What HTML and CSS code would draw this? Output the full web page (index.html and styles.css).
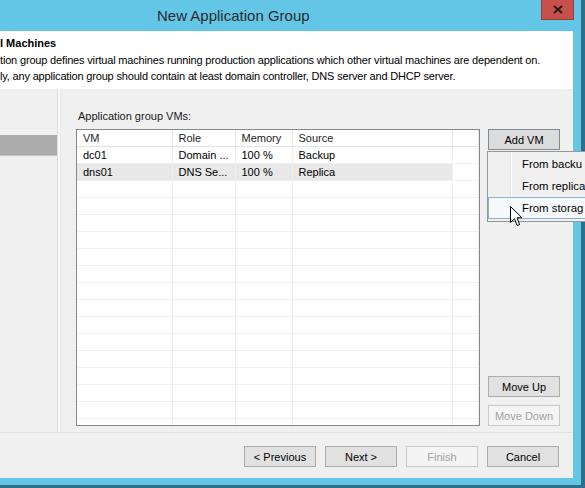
FILE: index.html
```html
<!DOCTYPE html>
<html lang="en">
<head>
    <meta charset="UTF-8">
    <meta name="viewport" content="width=device-width, initial-scale=1.0">
    <title>New Application Group</title>
    <link rel="stylesheet" href="styles.css">
</head>
<body>

    <div class="window">
        <div class="titlebar">
            <div class="title">New Application Group</div>
            <div class="close-btn">
                <svg width="10" height="9" viewBox="0 0 10 9"><path d="M1 1 L9 8 M9 1 L1 8" stroke="#2a1a1a" stroke-width="2.2"/></svg>
            </div>
        </div>

        <div class="dialog">
            <!-- Kopfbereich -->
            <div class="header">
                <div class="header-title">l Machines</div>
                <div class="header-desc">
                    tion group defines virtual machines running production applications which other virtual machines are dependent on.<br>
                    ly, any application group should contain at least domain controller, DNS server and DHCP server.
                </div>
            </div>

            <div class="body">
                <div class="nav">
                    <div class="nav-item active"></div>
                </div>
                <div class="nav-sep"></div>

                <div class="main">
                    <div class="label">Application group VMs:</div>
                    <div class="vm-area">
                        <div class="vm-list">
                            <table class="vm-table">
                                <colgroup>
                                    <col style="width: 95px">
                                    <col style="width: 63px">
                                    <col style="width: 57px">
                                    <col style="width: 160px">
                                    <col>
                                </colgroup>
                                <thead>
                                    <tr><th>VM</th><th>Role</th><th>Memory</th><th>Source</th><th></th></tr>
                                </thead>
                                <tbody id="vm-rows">
                                    <tr><td>dc01</td><td>Domain ...</td><td>100 %</td><td>Backup</td><td></td></tr>
                                    <tr class="selected"><td>dns01</td><td>DNS Se...</td><td>100 %</td><td>Replica</td><td class="plain"></td></tr>
                                </tbody>
                            </table>
                        </div>
                        <div class="side-buttons">
                            <button class="btn btn-active">Add VM</button>
                            <div class="spacer"></div>
                            <button class="btn">Move Up</button>
                            <button class="btn" disabled>Move Down</button>
                        </div>
                    </div>
                </div>
            </div>

            <div class="footer">
                <button class="btn">&lt; Previous</button>
                <button class="btn">Next &gt;</button>
                <button class="btn" disabled>Finish</button>
                <button class="btn">Cancel</button>
            </div>
        </div>
    </div>

    <!-- Kontextmenü von "Add VM" (ragt über den Fensterrand) -->
    <div class="menu">
        <div class="menu-item">From backu</div>
        <div class="menu-item">From replica</div>
        <div class="menu-item hover">From storag</div>
    </div>

    <svg class="cursor" width="13" height="21" viewBox="0 0 13 21">
        <path d="M0.5 0.5 V16.5 L4.5 12.8 L7.2 19.5 L9.6 18.5 L7 11.8 H12 Z" fill="#fff" stroke="#000" stroke-width="1"/>
    </svg>

    <script>
        // leere Zeilen auffüllen
        const rows = document.getElementById('vm-rows');
        for (let i = 0; i < 15; i++) {
            const tr = document.createElement('tr');
            for (let c = 0; c < 5; c++) {
                tr.appendChild(document.createElement('td'));
            }
            rows.appendChild(tr);
        }
    </script>

</body>
</html>
```

FILE: styles.css
```css
body {
    margin: 0;
    font-family: "Liberation Sans", Arial, sans-serif;
    font-size: 11px;
    color: #000;
    background-color: #2f6f88;
    overflow: hidden;
}

.window {
    position: relative;
    width: 581px;
    height: 485px;
    background-color: #63c6e7;
    border-right: 2px solid #2f6f88;
    overflow: hidden;
}

.titlebar {
    display: flex;
    height: 31px;
}

.title {
    margin-left: 157px;
    margin-top: 6px;
    font-size: 15px;
    line-height: 20px;
    color: #2b2b2b;
}

.close-btn {
    margin-left: auto;
    margin-right: 7px;
    width: 31px;
    height: 19px;
    background-color: #c7504b;
    border: 1px solid #9b3a36;
    border-top: none;
    display: flex;
    align-items: center;
    justify-content: center;
}

.dialog {
    width: 573px;
    height: 447px;
    background-color: #f0f0f0;
    display: flex;
    flex-direction: column;
}

.header {
    height: 58px;
    box-sizing: border-box;
    padding-top: 5px;
    background-color: #fff;
}

.header-title {
    font-weight: bold;
    line-height: 14px;
}

.header-desc {
    margin-top: 2px;
    line-height: 16px;
    letter-spacing: -0.17px;
}

.body {
    display: flex;
    height: 343px;
    border-bottom: 1px solid #e2e2e2;
}

.nav {
    width: 57px;
    border-right: 1px solid #dcdcdc;
}

.nav-item.active {
    margin-top: 46px;
    height: 20px;
    background-color: #acacac;
    border-bottom: 1px solid #c4c4c4;
}

.nav-sep {
    width: 2px;
    border-right: 1px solid #e6e6e6;
    background-color: #fafafa;
}

.main {
    flex: 1;
    padding-top: 20px;
    padding-left: 15px;
}

.label {
    padding-left: 2px;
    line-height: 14px;
    color: #1a1a1a;
}

.vm-area {
    display: flex;
    gap: 8px;
    margin-top: 6px;
}

.vm-list {
    width: 402px;
    height: 295px;
    border: 1px solid #828790;
    background-color: #fff;
    overflow: hidden;
}

.vm-table {
    width: 100%;
    table-layout: fixed;
    border-collapse: collapse;
}

.vm-table th,
.vm-table td {
    height: 16px;
    padding: 0 0 0 6px;
    text-align: left;
    font-weight: normal;
    line-height: 16px;
    white-space: nowrap;
    overflow: hidden;
    border-right: 1px solid #f0f0f0;
    border-bottom: 1px solid #f0f0f0;
}

.vm-table th {
    border-right: 1px solid #e5e5e5;
    border-bottom: 1px solid #e5e5e5;
    color: #1e1e1e;
}

.vm-table tr.selected td {
    background-color: #e8e8e8;
}

.vm-table tr.selected td.plain {
    background-color: #fff;
}

.side-buttons {
    display: flex;
    flex-direction: column;
    width: 72px;
    height: 297px;
}

.spacer {
    flex: 1;
}

.btn {
    height: 21px;
    width: 72px;
    padding: 0;
    font-family: "Liberation Sans", Arial, sans-serif;
    font-size: 11px;
    color: #000;
    background-color: #e1e1e1;
    border: 1px solid #adadad;
}

.side-buttons .btn + .btn {
    margin-top: 8px;
}

.btn-active {
    background-color: #dcdcdc;
    border-color: #7e8a96;
}

.btn:disabled {
    color: #a3a3a3;
    background-color: #f4f4f4;
    border-color: #c8c8c8;
}

.footer {
    display: flex;
    justify-content: flex-end;
    gap: 9px;
    padding-top: 13px;
    padding-right: 14px;
}

.menu {
    position: absolute;
    left: 487px;
    top: 151px;
    width: 97px;
    padding: 1px 0 2px 0;
    background-color: #f0f0f0;
    border: 1px solid #979797;
    border-right: none;
    background-image: linear-gradient(to right, #f0f0f0 22px, #e2e3e3 22px, #e2e3e3 23px, #fff 23px, #fff 24px, #f0f0f0 24px);
    overflow: hidden;
}

.menu-item {
    height: 22px;
    line-height: 22px;
    padding-left: 34px;
    font-size: 11.4px;
    color: #000;
    white-space: nowrap;
    box-sizing: border-box;
}

.menu-item.hover {
    border: 1px solid #8fb0d3;
    border-right: none;
    line-height: 20px;
    padding-left: 33px;
    background-color: #f7fafd;
}

.cursor {
    position: absolute;
    left: 510px;
    top: 206px;
}
```
